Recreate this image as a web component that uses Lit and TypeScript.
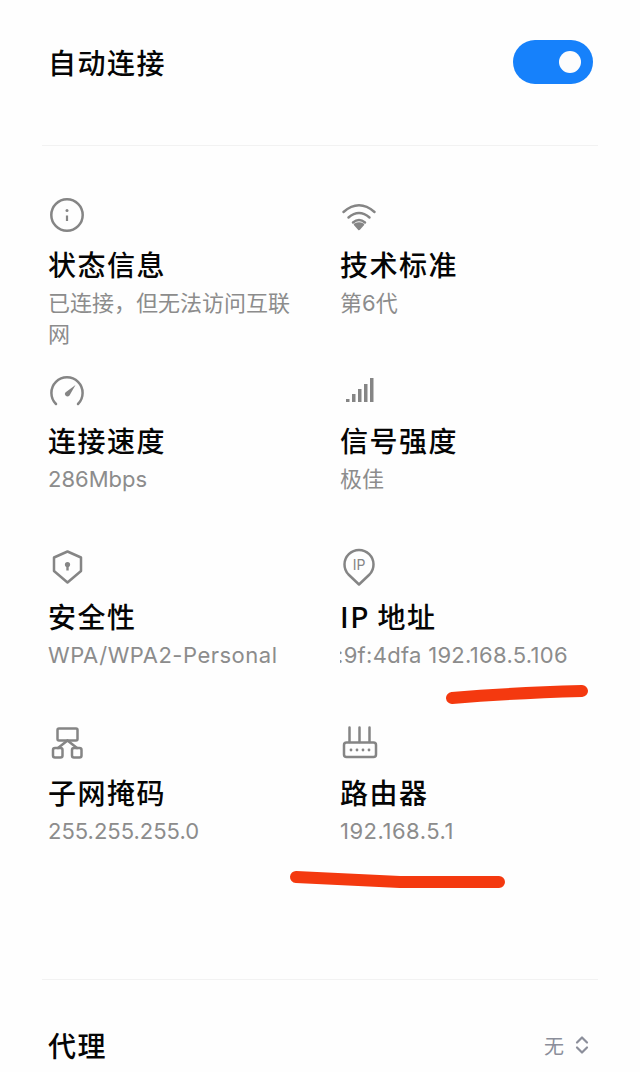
import { LitElement, html, css, svg } from "lit";
import { customElement } from "lit/decorators.js";

const icons = {
  info: svg`<circle cx="19" cy="18" r="15.7"/><path class="thin" d="M19 18.5V24"/><circle class="f n" cx="19" cy="13.5" r="1.5"/>`,
  wifi: svg`<path d="M3.5 15Q19 1.5 34.5 15M8.5 20.5Q19 11.5 29.5 20.5M13 25.5Q19 20.5 25 25.5"/><path class="f" d="M15 27.5Q19 25.5 23 27.5L19 32z"/>`,
  gauge: svg`<path d="M8 31A15.6 15.6 0 1 1 30 31"/><path class="f n" d="M27.5 12L21.5 22.5Q19.5 24.5 17.5 22.5Q16 20.5 18 19z"/>`,
  signal: svg`<g class="n f"><rect x="6" y="26" width="3.5" height="3"/><rect x="12" y="21" width="3.5" height="8"/><rect x="18" y="16" width="3.5" height="13"/><rect x="24" y="11" width="3.5" height="18"/><rect x="30" y="5" width="3.5" height="24"/></g>`,
  shield: svg`<path d="M19.5 2.5L33 8.5V22L19.5 33.5L6 22V8.5z"/><circle class="f n" cx="19.5" cy="15.5" r="2.6"/><rect class="f n" x="18.3" y="16" width="2.4" height="5.5"/>`,
  pin: svg`<path d="M19 35.5L8.5 25.5A14.5 14.5 0 1 1 29.5 25.5z"/><text x="19" y="21" text-anchor="middle" class="t">IP</text>`,
  network: svg`<rect x="9.5" y="3.5" width="20" height="12" rx="1.5"/><rect x="5" y="23" width="9.5" height="9.5" rx="2"/><rect x="24" y="23" width="9.5" height="9.5" rx="2"/><path d="M19.5 15.5L10 23M19.5 15.5L29 23"/>`,
  router: svg`<rect x="4" y="17.5" width="32" height="14.5" rx="2.5"/><path d="M9.5 2.5V17M19.5 2.5V17M29.5 2.5V17"/><g class="f n"><circle cx="11" cy="25" r="1.4"/><circle cx="17" cy="25" r="1.4"/><circle cx="23" cy="25" r="1.4"/><circle cx="29" cy="25" r="1.4"/></g>`,
};

type Cell = { icon: keyof typeof icons; title: string; value: string; mod?: string };
const cells: Cell[] = [
  { icon: "info", title: "状态信息", value: "已连接，但无法访问互联网" },
  { icon: "wifi", title: "技术标准", value: "第6代" },
  { icon: "gauge", title: "连接速度", value: "286Mbps" },
  { icon: "signal", title: "信号强度", value: "极佳" },
  { icon: "shield", title: "安全性", value: "WPA/WPA2-Personal", mod: "wide" },
  { icon: "pin", title: "IP 地址", value: ":9f:4dfa 192.168.5.106", mod: "clip" },
  { icon: "network", title: "子网掩码", value: "255.255.255.0" },
  { icon: "router", title: "路由器", value: "192.168.5.1", mod: "wide" },
];

@customElement("app-root")
export class AppRoot extends LitElement {
  static styles = css`
    :host {
      display: block;
      position: relative;
      width: 640px;
      height: 1072px;
      overflow: hidden;
      background: #fefefe;
      font-family: "Noto Sans CJK SC", "Noto Sans", sans-serif;
      color: #050505;
    }
    .top {
      display: flex;
      justify-content: space-between;
      align-items: center;
      padding: 40px 47px 0 48px;
    }
    .heading {
      font-size: 28px;
      line-height: 44px;
      font-weight: 500;
      letter-spacing: 1.5px;
    }
    .toggle {
      width: 80px;
      height: 44px;
      border-radius: 22px;
      background: #1681fb;
      display: flex;
      align-items: center;
      justify-content: flex-end;
      padding-right: 12px;
      box-sizing: border-box;
    }
    .thumb {
      width: 22px;
      height: 22px;
      border-radius: 50%;
      background: #fdfdfd;
    }
    .rule {
      height: 1px;
      margin: 0 42px;
      background: #f2f2f2;
    }
    .rule.a { margin-top: 61px; }
    .rule.b { margin-top: 78px; }
    .grid {
      display: grid;
      grid-template-columns: 292px 258px;
      grid-template-rows: repeat(4, 176px);
      padding: 51px 0 0 48px;
    }
    .icon {
      display: block;
      width: 40px;
      height: 36px;
      overflow: visible;
      fill: none;
      stroke: #858585;
      stroke-width: 2.5;
      stroke-linecap: round;
      stroke-linejoin: round;
    }
    .icon .thin { stroke-width: 2.2; stroke-linecap: butt; }
    .icon .f { fill: #858585; }
    .icon .n { stroke: none; }
    .icon .t {
      fill: #858585;
      stroke: none;
      font-size: 14px;
      font-family: "Inter", sans-serif;
    }
    .title {
      margin-top: 11px;
      font-size: 28px;
      line-height: 40px;
      font-weight: 500;
      letter-spacing: 1.5px;
    }
    .value {
      margin-top: 4px;
      width: 244px;
      font-family: "Inter", "Noto Sans CJK SC", sans-serif;
      font-size: 22px;
      line-height: 31px;
      color: #8c8c8c;
    }
    .value.wide { letter-spacing: 0.5px; }
    .value.clip {
      width: 228px;
      overflow: hidden;
      white-space: nowrap;
      letter-spacing: 0.3px;
    }
    .value.clip span { display: block; margin-left: -3px; }
    .bottom {
      display: flex;
      justify-content: space-between;
      align-items: center;
      padding: 43px 51px 0 48px;
    }
    .side {
      display: flex;
      align-items: center;
      gap: 11px;
      font-size: 20px;
      color: #8b8e9a;
    }
    .updown {
      width: 14px;
      height: 20px;
      fill: none;
      stroke: #8b8e9a;
      stroke-width: 2.2;
      stroke-linecap: round;
      stroke-linejoin: round;
    }
    .marks {
      position: absolute;
      inset: 0;
      width: 640px;
      height: 1072px;
      fill: none;
      stroke: #f4390f;
      stroke-width: 12;
      stroke-linecap: round;
      stroke-linejoin: round;
      pointer-events: none;
    }
  `;

  render() {
    return html`
      <div class="top">
        <div class="heading">自动连接</div>
        <div class="toggle"><div class="thumb"></div></div>
      </div>
      <div class="rule a"></div>
      <div class="grid">
        ${cells.map(
          (c) => html`<div>
            <svg class="icon" viewBox="0 0 40 36">${icons[c.icon]}</svg>
            <div class="title">${c.title}</div>
            <div class="value ${c.mod ?? ""}"><span>${c.value}</span></div>
          </div>`
        )}
      </div>
      <div class="rule b"></div>
      <div class="bottom">
        <div class="heading">代理</div>
        <div class="side">
          <span>无</span>
          <svg class="updown" viewBox="0 0 14 20"><path d="M2 7.5L7 2.5L12 7.5M2 12.5L7 17.5L12 12.5"/></svg>
        </div>
      </div>
      <svg class="marks" viewBox="0 0 640 1072">
        <path d="M452 698Q510 693 582 691"/>
        <path d="M296 877Q360 880 400 882L499 882"/>
      </svg>
    `;
  }
}
